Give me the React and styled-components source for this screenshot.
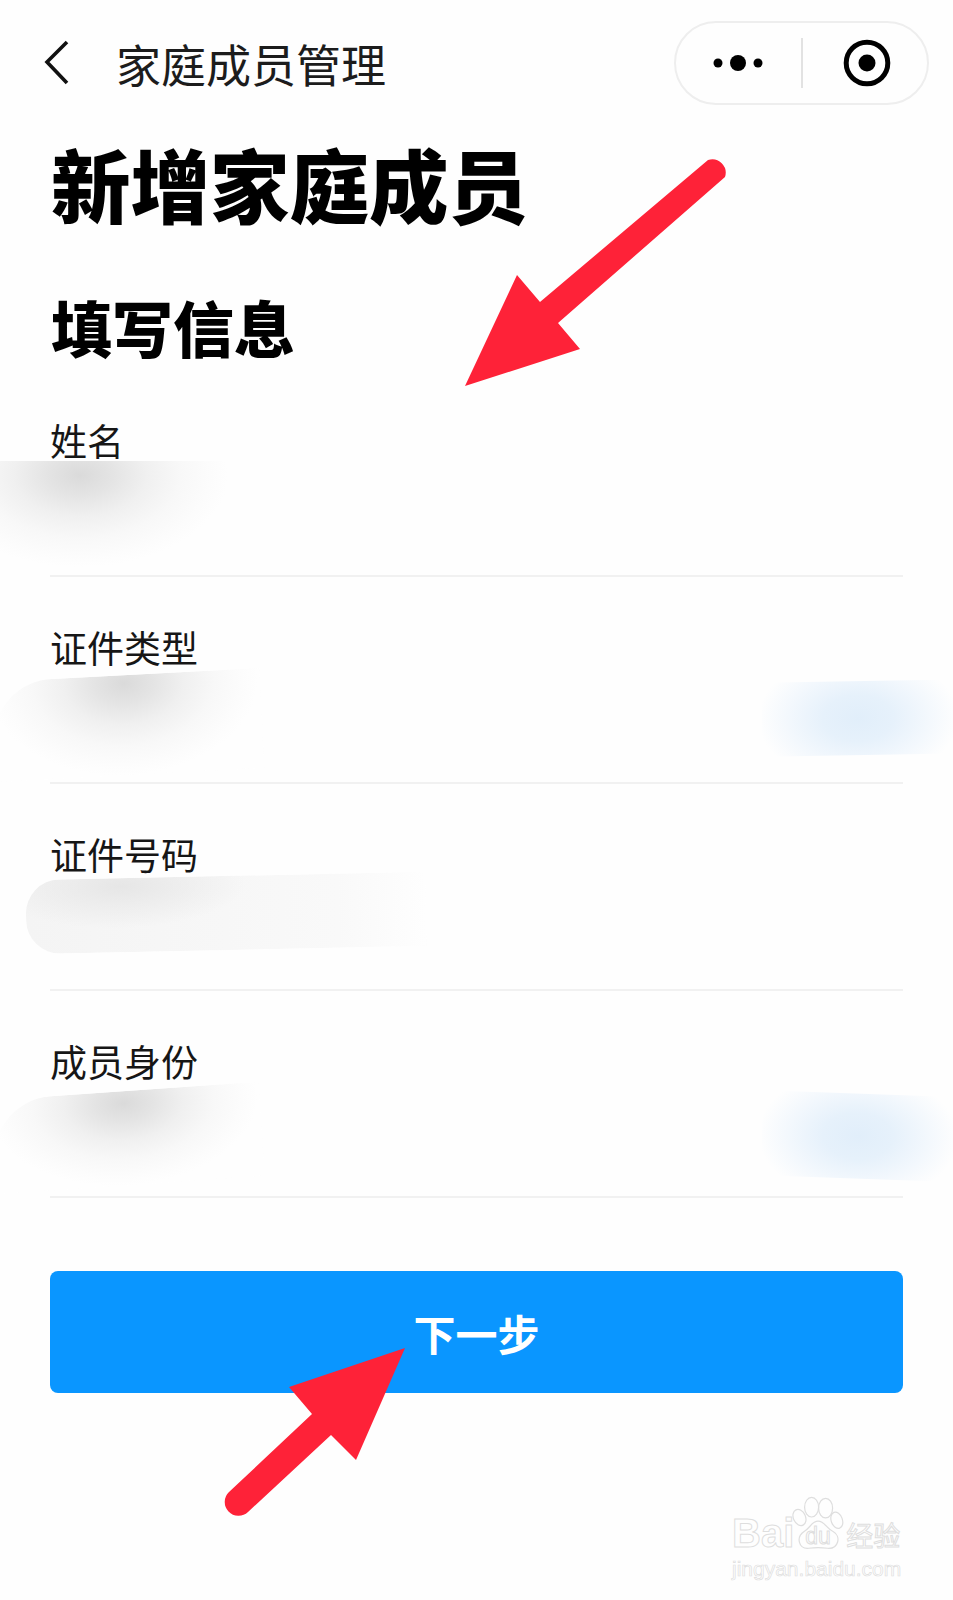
import React from 'react';
import styled, { createGlobalStyle } from 'styled-components';

const GlobalStyle = createGlobalStyle`
  html, body {
    margin: 0;
    padding: 0;
    background: #fff;
  }
  * {
    box-sizing: border-box;
  }
`;

const Page = styled.div`
  position: relative;
  width: 953px;
  height: 1600px;
  overflow: hidden;
  background: #fefefe;
  color: #000;
  font-family: "Noto Sans CJK SC", "Noto Sans", sans-serif;
`;

const NavBar = styled.div`
  display: flex;
  align-items: center;
  height: 84px;
  margin-top: 21px;
  padding: 0 24px 0 44px;
`;

const BackIcon = styled.svg`
  width: 26px;
  height: 46px;
  flex: none;
`;

const NavTitle = styled.div`
  flex: 1;
  margin-left: 46px;
  padding-top: 2px;
  font-size: 45px;
  line-height: 84px;
  color: #1c1c1c;
`;

const Capsule = styled.div`
  display: flex;
  align-items: center;
  width: 255px;
  height: 84px;
  border: 2px solid #eeeeee;
  border-radius: 42px;
`;

const CapsuleSlot = styled.div`
  flex: 1 1 0;
  display: flex;
  align-items: center;
  justify-content: center;
`;

const CapsuleDivider = styled.div`
  width: 2px;
  height: 50px;
  background: #e2e2e2;
`;

const TargetIcon = styled.svg`
  width: 48px;
  height: 48px;
  margin-left: 5px;
`;

const Content = styled.div`
  padding: 0 50px;
`;

const Heading = styled.h1`
  margin: 33px 0 0 1px;
  font-size: 79.5px;
  line-height: 90px;
  font-weight: 900;
  color: #000;
`;

const SubHeading = styled.h2`
  margin: 63px 0 0 1px;
  font-size: 61px;
  line-height: 72px;
  font-weight: 900;
  color: #000;
`;

const Form = styled.div`
  margin-top: 7px;
`;

const Field = styled.div`
  position: relative;
  height: 207px;
  padding-top: 45px;
  border-bottom: 2px solid #f1f1f1;
`;

const Label = styled.div`
  font-size: 37px;
  line-height: 50px;
  color: #161616;
`;

const Smudge = styled.div`
  position: absolute;
  left: ${(p) => p.$left}px;
  top: ${(p) => p.$top}px;
  width: ${(p) => p.$w}px;
  height: ${(p) => p.$h}px;
  transform: rotate(${(p) => p.$tilt || 0}deg);
  border-radius: ${(p) => p.$radius || '0'};
  background: ${(p) => p.$bg};
`;

const greyPatch = (cx, cy, rx, ry) => `
  radial-gradient(ellipse ${rx}px ${ry}px at ${cx}px ${cy}px,
    #dadada 0%, #e4e4e4 22%, #f0f0f0 45%, #f8f8f8 68%, #fcfcfc 88%, #fefefe 100%),
  #fefefe`;

const bluePatch = `
  radial-gradient(ellipse 100px 66px at 96px 50%,
    #e1eefa 0%, #e6f1fb 35%, #f3f8fd 70%, rgba(254,254,254,0) 100%),
  #fefefe`;

const longPatch = `
  radial-gradient(ellipse 125px 42px at 95px 8px, #e6e6e6 0%, rgba(248,248,248,0) 100%),
  linear-gradient(90deg, #f4f4f4 0%, #f7f7f7 50%, #f9f9f9 78%, #fefefe 100%)`;

const NextButton = styled.button`
  display: flex;
  align-items: center;
  justify-content: center;
  width: 100%;
  height: 122px;
  margin-top: 73px;
  padding: 0;
  border: none;
  border-radius: 8px;
  background: #0a96ff;
  color: #fff;
  font-family: inherit;
  font-size: 42px;
  font-weight: 700;
`;

const Arrow = styled.svg`
  position: absolute;
  left: ${(p) => p.$left}px;
  top: ${(p) => p.$top}px;
`;

const Watermark = styled.div`
  position: absolute;
  left: 732px;
  top: 1496px;
  width: 172px;
  color: transparent;
  -webkit-text-stroke: 1px #dedede;
`;

const MarkRow = styled.div`
  display: flex;
  align-items: flex-end;
  height: 56px;
`;

const MarkLatin = styled.span`
  font-family: "Liberation Sans", sans-serif;
  font-weight: 700;
  font-size: 40px;
  line-height: 38px;
`;

const Paw = styled.div`
  position: relative;
  width: 56px;
  height: 56px;
  flex: none;
  margin: 0 -2px;
`;

const PawText = styled.span`
  position: absolute;
  left: 13px;
  bottom: 3px;
  font-family: "Liberation Sans", sans-serif;
  font-size: 23px;
  line-height: 26px;
`;

const MarkCjk = styled.span`
  font-size: 27px;
  line-height: 34px;
  white-space: nowrap;
`;

const MarkUrl = styled.div`
  margin-top: 5px;
  font-family: "Liberation Sans", sans-serif;
  font-size: 21px;
  line-height: 24px;
  white-space: nowrap;
  -webkit-text-stroke: 0.7px #dedede;
`;

const fields = [
  {
    label: '姓名',
    patches: [{ left: -50, top: 91, w: 230, h: 106, bg: greyPatch(80, 14, 148, 92) }],
  },
  {
    label: '证件类型',
    patches: [
      { left: -56, top: 98, w: 268, h: 100, bg: greyPatch(132, 8, 134, 92), tilt: -3, radius: '60px 0 0 0' },
      { left: 712, top: 104, w: 215, h: 74, bg: bluePatch, tilt: -1 },
    ],
  },
  {
    label: '证件号码',
    patches: [{ left: -24, top: 92, w: 400, h: 74, bg: longPatch, tilt: -1.2, radius: '34px 0 0 34px' }],
  },
  {
    label: '成员身份',
    patches: [
      { left: -56, top: 100, w: 268, h: 94, bg: greyPatch(132, 12, 134, 82), tilt: -4, radius: '60px 0 0 0' },
      { left: 712, top: 103, w: 215, h: 85, bg: bluePatch, tilt: 2 },
    ],
  },
];

export default function App() {
  return (
    <Page>
      <GlobalStyle />
      <NavBar>
        <BackIcon viewBox="0 0 26 46">
          <path d="M23 2 L3 22 L23 43" fill="none" stroke="#111" strokeWidth="3.6" />
        </BackIcon>
        <NavTitle>家庭成员管理</NavTitle>
        <Capsule>
          <CapsuleSlot>
            <svg width="50" height="18" viewBox="0 0 50 18">
              <circle cx="5" cy="9" r="4.5" fill="#000" />
              <circle cx="25" cy="9" r="8" fill="#000" />
              <circle cx="45" cy="9" r="4.5" fill="#000" />
            </svg>
          </CapsuleSlot>
          <CapsuleDivider />
          <CapsuleSlot>
            <TargetIcon viewBox="0 0 48 48">
              <circle cx="24" cy="24" r="20.8" fill="none" stroke="#000" strokeWidth="5" />
              <circle cx="24" cy="24" r="8.5" fill="#000" />
            </TargetIcon>
          </CapsuleSlot>
        </Capsule>
      </NavBar>
      <Content>
        <Heading>新增家庭成员</Heading>
        <SubHeading>填写信息</SubHeading>
        <Form>
          {fields.map((f) => (
            <Field key={f.label}>
              <Label>{f.label}</Label>
              {f.patches.map((s, i) => (
                <Smudge
                  key={i}
                  $left={s.left}
                  $top={s.top}
                  $w={s.w}
                  $h={s.h}
                  $bg={s.bg}
                  $tilt={s.tilt}
                  $radius={s.radius}
                />
              ))}
            </Field>
          ))}
        </Form>
        <NextButton>下一步</NextButton>
      </Content>

      <Arrow $left={460} $top={150} width="275" height="240" viewBox="460 150 275 240">
        <path
          d="M465 386 L517 275 L540 302 L708 160 A13.5 13.5 0 0 1 725 177 L558 323 L580 349 Z"
          fill="#fe2238"
        />
      </Arrow>
      <Arrow $left={220} $top={1340} width="195" height="185" viewBox="220 1340 195 185">
        <path
          d="M405 1348 L289 1387 L312 1414 L229 1492 A13.5 13.5 0 0 0 248 1512 L331 1435 L356 1460 Z"
          fill="#fe2238"
        />
      </Arrow>

      <Watermark>
        <MarkRow>
          <MarkLatin>Bai</MarkLatin>
          <Paw>
            <svg width="56" height="56" viewBox="0 0 60 60" fill="none" stroke="#dedede" strokeWidth="1.3">
              <ellipse cx="8" cy="23" rx="6.5" ry="9" transform="rotate(-25 8 23)" />
              <ellipse cx="21" cy="12" rx="7.5" ry="10.5" />
              <ellipse cx="36" cy="13" rx="7.5" ry="10.5" />
              <ellipse cx="48" cy="26" rx="6" ry="9" transform="rotate(-20 48 26)" />
              <path d="M28 27 C35 27 37 35 44 38 C53 43 50 57 38 56 C31 55 25 55 18 56 C7 57 4 44 13 38 C20 34 21 27 28 27 Z" />
            </svg>
            <PawText>du</PawText>
          </Paw>
          <MarkCjk>经验</MarkCjk>
        </MarkRow>
        <MarkUrl>jingyan.baidu.com</MarkUrl>
      </Watermark>
    </Page>
  );
}
